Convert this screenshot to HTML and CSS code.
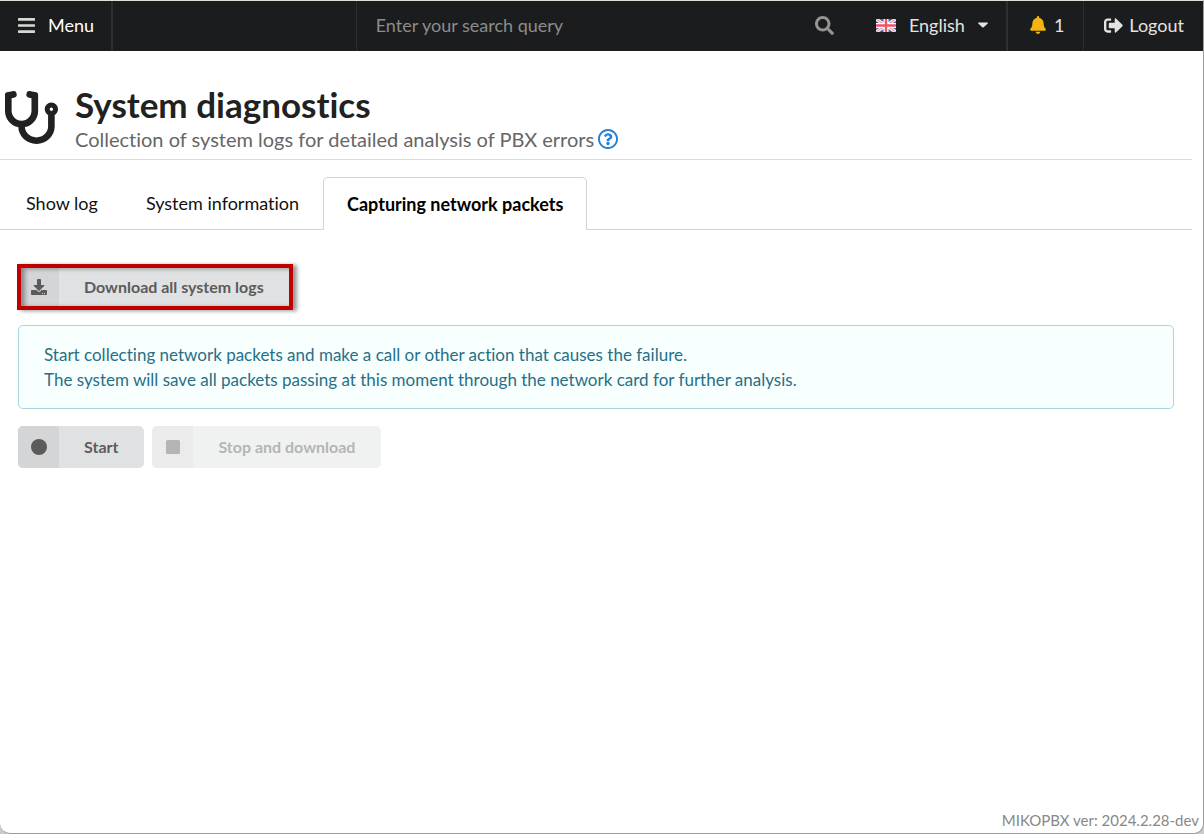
FILE: index.html
```html
<!DOCTYPE html>
<html lang="en">
<head>
<meta charset="utf-8">
<meta name="viewport" content="width=device-width, initial-scale=1">
<title>System diagnostics</title>
<link rel="stylesheet" href="styles.css">
</head>
<body>
<div class="window">
  <header class="topbar">
    <button type="button" class="top-item menu-toggle">
      <svg class="icon-bars" viewBox="0 0 448 392" aria-hidden="true"><path d="M16 72h416a16 16 0 0 0 16-16V16a16 16 0 0 0-16-16H16A16 16 0 0 0 0 16v40a16 16 0 0 0 16 16zm0 160h416a16 16 0 0 0 16-16v-40a16 16 0 0 0-16-16H16a16 16 0 0 0-16 16v40a16 16 0 0 0 16 16zm0 160h416a16 16 0 0 0 16-16v-40a16 16 0 0 0-16-16H16a16 16 0 0 0-16 16v40a16 16 0 0 0 16 16z"/></svg>
      <span>Menu</span>
    </button>
    <div class="top-space"></div>
    <form class="search" role="search">
      <input class="search-input" type="text" aria-label="Search" placeholder="Enter your search query">
      <button type="submit" class="search-button" aria-label="Search">
        <svg class="icon-md" viewBox="0 0 512 512" aria-hidden="true"><path d="M505 442.7L405.3 343c-4.5-4.5-10.6-7-17-7H372c27.6-35.3 44-79.7 44-128C416 93.1 322.9 0 208 0S0 93.1 0 208s93.1 208 208 208c48.3 0 92.7-16.4 128-44v16.3c0 6.4 2.5 12.5 7 17l99.7 99.7c9.4 9.4 24.6 9.4 33.9 0l28.3-28.3c9.4-9.4 9.4-24.6.1-34zM208 336c-70.7 0-128-57.2-128-128 0-70.7 57.2-128 128-128 70.7 0 128 57.2 128 128 0 70.7-57.2 128-128 128z"/></svg>
      </button>
    </form>
    <button type="button" class="top-item language" aria-haspopup="listbox">
      <svg class="flag" viewBox="0 0 20 13" aria-hidden="true">
        <rect width="20" height="13" fill="#4a5ba5"/>
        <path d="M0 0L20 13M20 0L0 13" stroke="#f3eef4" stroke-width="3.4"/>
        <path d="M0 0L20 13M20 0L0 13" stroke="#ea8a95" stroke-width="1"/>
        <path d="M10 0V13M0 6.5H20" stroke="#fff" stroke-width="5"/>
        <path d="M10 0V13M0 6.5H20" stroke="#ee5560" stroke-width="2.4"/>
      </svg>
      <span>English</span>
      <svg class="icon-caret" viewBox="0 0 10 5" aria-hidden="true"><path d="M.6 0H9.400q.9.2.3 1L5.700 4.700Q5 5.300 4.300 4.700L.3 1Q-.3.2.6 0z"/></svg>
    </button>
    <a href="#" class="top-item alerts" aria-label="1 notification">
      <svg class="icon-bell" viewBox="0 0 448 512" aria-hidden="true"><path d="M224 512c35.320 0 63.970-28.650 63.970-64H160.030c0 35.350 28.650 64 63.970 64zm215.390-149.710c-19.320-20.760-55.470-51.990-55.470-154.290 0-77.700-54.480-139.900-127.940-155.160V32c0-17.670-14.320-32-31.980-32s-31.980 14.330-31.980 32v20.840C118.560 68.100 64.080 130.300 64.080 208c0 102.300-36.150 133.530-55.470 154.290-6 6.450-8.660 14.160-8.610 21.710.11 16.400 12.980 32 32.100 32h383.800c19.120 0 32-15.600 32.100-32 .05-7.550-2.610-15.270-8.610-21.710z"/></svg>
      <span>1</span>
    </a>
    <a href="#" class="top-item logout">
      <svg class="icon-md" viewBox="0 0 512 512" aria-hidden="true"><path d="M497 273L329 441c-15 15-41 4.500-41-17v-96H152c-13.300 0-24-10.700-24-24v-96c0-13.300 10.700-24 24-24h136V88c0-21.400 25.900-32 41-17l168 168c9.300 9.400 9.300 24.600 0 34zM192 436v-40c0-6.600-5.400-12-12-12H96c-17.700 0-32-14.300-32-32V160c0-17.700 14.300-32 32-32h84c6.600 0 12-5.400 12-12V76c0-6.600-5.400-12-12-12H96c-53 0-96 43-96 96v192c0 53 43 96 96 96h84c6.600 0 12-5.400 12-12z"/></svg>
      <span>Logout</span>
    </a>
  </header>

  <main class="content">
    <div class="page-header">
      <svg class="icon-page" viewBox="0 0 512 512" aria-hidden="true"><path d="M447.100 112c-34.200.5-62.300 28.400-63 62.600-.5 24.300 12.500 45.600 32 56.800V344c0 57.300-50.200 104-112 104-60 0-109.200-44.100-111.900-99.200C265 333.800 320 269.200 320 192V36.600c0-11.400-8.100-21.300-19.300-23.500L237.800.5c-13-2.600-25.600 5.800-28.200 18.800L206.400 35c-2.600 13 5.800 25.600 18.800 28.200l30.700 6.100v121.400c0 52.900-42.200 96.700-95.100 97.200-53.400.5-96.900-42.700-96.900-96V69.400l30.700-6.100c13-2.600 21.400-15.200 18.800-28.200l-3.100-15.700C107.700 6.400 95.100-2 82.100.6L19.300 13C8.100 15.300 0 25.100 0 36.600V192c0 77.300 55.100 142 128.100 156.800C130.700 439.200 208.600 512 304 512c97 0 176-75.400 176-168V231.400c19.100-11.100 32-31.700 32-55.400 0-35.700-29.200-64.500-64.900-64zm.9 80c-8.800 0-16-7.200-16-16s7.200-16 16-16 16 7.200 16 16-7.200 16-16 16z"/></svg>
      <div>
        <h1 class="title">System diagnostics</h1>
        <p class="subtitle">
          <span>Collection of system logs for detailed analysis of PBX errors</span>
          <a href="#" class="help" aria-label="Help"><svg class="icon-help" viewBox="8 8 496 496" aria-hidden="true"><path d="M256 8C119.043 8 8 119.083 8 256c0 136.997 111.043 248 248 248s248-111.003 248-248C504 119.083 392.957 8 256 8zm0 448c-110.532 0-200-89.431-200-200 0-110.495 89.472-200 200-200 110.491 0 200 89.471 200 200 0 110.530-89.431 200-200 200zm107.244-255.200c0 67.052-72.421 68.084-72.421 92.863V300c0 6.627-5.373 12-12 12h-45.647c-6.627 0-12-5.373-12-12v-8.659c0-35.745 27.100-50.034 47.579-61.516 17.561-9.845 28.324-16.541 28.324-29.579 0-17.246-21.999-28.693-39.784-28.693-23.189 0-33.894 10.977-48.942 29.969-4.057 5.120-11.460 6.071-16.666 2.124l-27.824-21.098c-5.107-3.872-6.251-11.066-2.644-16.363C184.846 131.491 214.940 112 261.794 112c49.071 0 101.450 38.304 101.450 88.800zM298 368c0 23.159-18.841 42-42 42s-42-18.841-42-42 18.841-42 42-42 42 18.841 42 42z"/></svg></a>
        </p>
      </div>
    </div>

    <nav class="tabs">
      <a href="#" class="tab">Show log</a>
      <a href="#" class="tab">System information</a>
      <a href="#" class="tab active" aria-current="page">Capturing network packets</a>
    </nav>

    <section class="panel">
      <div class="highlight">
        <button type="button" class="btn">
          <span class="btn-icon"><svg class="icon-sm" viewBox="0 0 512 512" aria-hidden="true"><path fill-rule="evenodd" d="M216 0h80c13.300 0 24 10.700 24 24v168h87.700c17.800 0 26.700 21.500 14.100 34.100L269.700 378.300c-7.500 7.500-19.800 7.500-27.300 0L90.100 226.100c-12.600-12.600-3.700-34.100 14.100-34.100H192V24c0-13.300 10.700-24 24-24zm296 376v112c0 13.300-10.700 24-24 24H24c-13.300 0-24-10.700-24-24V376c0-13.300 10.700-24 24-24h146.700l49 49c20.100 20.100 52.500 20.100 72.600 0l49-49H488c13.300 0 24 10.700 24 24zm-124 88a20 20 0 1 0-40 0 20 20 0 0 0 40 0zm64 0a20 20 0 1 0-40 0 20 20 0 0 0 40 0z"/></svg></span>
          <span class="btn-label">Download all system logs</span>
        </button>
      </div>

      <p class="message">Start collecting network packets and make a call or other action that causes the failure.<br>The system will save all packets passing at this moment through the network card for further analysis.</p>

      <div class="actions">
        <button type="button" class="btn">
          <span class="btn-icon"><svg class="icon-sm" viewBox="0 0 16 16" aria-hidden="true"><circle cx="8" cy="8" r="8"/></svg></span>
          <span class="btn-label">Start</span>
        </button>
        <button type="button" class="btn" disabled>
          <span class="btn-icon"><svg class="icon-sm" viewBox="0 0 16 16" aria-hidden="true"><rect x="1" y="1" width="14" height="14" rx="1.500"/></svg></span>
          <span class="btn-label">Stop and download</span>
        </button>
      </div>
    </section>
  </main>

  <footer class="version">MIKOPBX ver: 2024.2.28-dev</footer>
</div>
</body>
</html>
```
FILE: styles.css
```css
* {
  box-sizing: border-box;
}

body {
  margin: 0;
  background: #c9cacb;
  color: #212121;
  font-family: Lato, "Liberation Sans", sans-serif;
  font-size: 18px;
  font-variant-ligatures: none;
}

button,
input {
  font: inherit;
  font-variant-ligatures: none;
}

button {
  border: 0;
  padding: 0;
  cursor: pointer;
}

a {
  color: inherit;
  text-decoration: none;
}

svg {
  display: block;
  flex: none;
  fill: currentColor;
}

.window {
  display: flex;
  flex-direction: column;
  min-height: 100vh;
  border: 1px solid #9b9b9b;
  border-top-color: #d9e3da;
  border-left: 0;
  border-radius: 0 0 10px 10px;
  background: #fff;
}

/* Top bar */

.topbar {
  display: flex;
  height: 50px;
  background: #1b1c1d;
  color: #e3e3e3;
}

.top-item {
  display: flex;
  align-items: center;
  padding-bottom: 2px;
  background: none;
  color: inherit;
}

.menu-toggle {
  gap: 13px;
  padding-left: 18px;
  padding-right: 17px;
  border-right: 2px solid #2d2e2f;
  color: #fff;
}

.top-space {
  flex: 243;
}

.search {
  display: flex;
  flex: 499;
  border-left: 1px solid #2d2e2f;
  color: #949494;
}

.search-input {
  flex: 1;
  min-width: 0;
  padding: 0 19px 2px;
  border: 0;
  outline: 0;
  background: none;
  color: #fff;
}

.search-input::placeholder {
  color: #8c8c8c;
  opacity: 1;
}

.search-button {
  padding: 0 21px 2px;
  background: none;
  color: inherit;
}

.language {
  gap: 13px;
  padding-left: 21px;
  padding-right: 18px;
  border-right: 2px solid #2d2e2f;
}

.alerts {
  gap: 8px;
  padding-left: 22px;
  padding-right: 19px;
  border-right: 1px solid #2d2e2f;
}

.logout {
  gap: 6px;
  padding-left: 20px;
  padding-right: 19px;
}

.icon-bars {
  width: 17px;
  height: 15px;
  fill: #d8d8d8;
}

.icon-md {
  width: 19px;
  height: 19px;
}

.flag {
  width: 20px;
  height: 13px;
}

.icon-caret {
  width: 10px;
  height: 6px;
}

.icon-bell {
  width: 16px;
  height: 18px;
  fill: #f2b40d;
}

/* Page header */

.content {
  flex: 1;
  padding: 32px 11px 0 0;
}

.page-header {
  display: flex;
  align-items: center;
  gap: 17px;
  padding: 0 0 7px 5px;
  border-bottom: 1px solid #dcdcdd;
}

.icon-page {
  width: 53px;
  height: 53px;
}

.title {
  margin: 0;
  font-size: 35px;
  font-weight: 700;
  line-height: 43px;
}

.subtitle {
  display: flex;
  align-items: center;
  gap: 4px;
  margin: 0;
  color: #666;
  font-size: 20px;
  line-height: 26px;
}

.help {
  color: #2580d4;
}

.icon-help {
  width: 20px;
  height: 20px;
}

/* Tabs */

.tabs {
  display: flex;
  align-items: flex-end;
  margin-top: 16px;
  padding-left: 2px;
  border-bottom: 1px solid #d4d4d5;
}

.tab {
  padding: 13px 23px;
  border: 1px solid transparent;
  border-bottom: 0;
  color: #111;
  line-height: 26px;
}

.tab.active {
  margin-bottom: -1px;
  border-color: #d4d4d5;
  border-radius: 5px 5px 0 0;
  background: #fff;
  color: #000;
  font-weight: 700;
}

/* Panel */

.panel {
  display: flex;
  flex-direction: column;
  align-items: flex-start;
  gap: 17px;
  padding: 36px 18px 18px;
}

.btn {
  display: inline-flex;
  height: 42px;
  overflow: hidden;
  border-radius: 5px;
  background: #e0e1e2;
  color: #5b5b5b;
  font-size: 16px;
  font-weight: 700;
}

.btn:disabled {
  opacity: .45;
  cursor: default;
}

.btn-icon {
  display: flex;
  align-items: center;
  justify-content: center;
  width: 41px;
  height: 100%;
  background: #d4d5d6;
}

.btn-label {
  padding: 0 26px 0 25px;
  line-height: 42px;
}

.icon-sm {
  width: 16px;
  height: 16px;
}

.highlight {
  position: relative;
  display: flex;
}

.highlight::after {
  content: "";
  position: absolute;
  inset: -2px -3px -2px -1px;
  border: 4px solid #c00000;
  box-shadow: 4px 1px 4px rgba(0, 0, 0, .4), inset 4px 1px 4px rgba(0, 0, 0, .35);
  pointer-events: none;
}

.highlight .btn-label {
  padding-right: 28px;
}

.highlight::after {
  right: -1px;
}

.message {
  align-self: stretch;
  margin: 0;
  padding: 16px 25px;
  border: 1px solid #a9d5de;
  border-radius: 5px;
  background: #f8ffff;
  color: #276f86;
  font-size: 17px;
  line-height: 25px;
}

.actions {
  display: flex;
  gap: 8px;
}

.version {
  padding: 0 4px 3px;
  color: #888;
  font-size: 15px;
  line-height: 20px;
  text-align: right;
}
```
